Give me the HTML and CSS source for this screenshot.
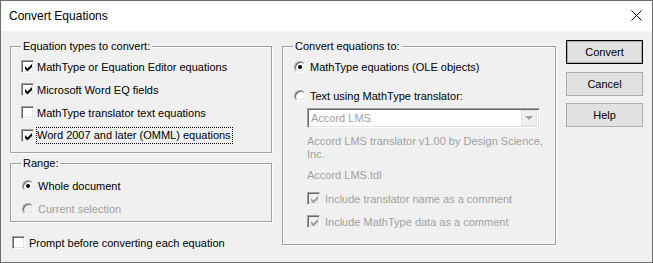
FILE: index.html
```html
<!DOCTYPE html>
<html lang="en">
  <head>
    <meta charset="UTF-8" />
    <title>Convert Equations</title>
    <link rel="stylesheet" href="styles.css">
  </head>

  <body>
    <div class="dialog">
      <div class="titlebar">
        <span class="title">Convert Equations</span>
        <svg class="close" width="11" height="11" viewBox="0 0 11 11">
          <path d="M0.5 0.5 L10.5 10.5 M10.5 0.5 L0.5 10.5" stroke="#000" stroke-width="1" fill="none" />
        </svg>
      </div>

      <div class="content">
        <div class="left">
          <div class="group types">
            <span class="legend">Equation types to convert:</span>
            <label class="row"><span class="check on"></span><span>MathType or Equation Editor equations</span></label>
            <label class="row"><span class="check on"></span><span>Microsoft Word EQ fields</span></label>
            <label class="row"><span class="check"></span><span>MathType translator text equations</span></label>
            <label class="row"><span class="check on"></span><span class="focus">Word 2007 and later (OMML) equations</span></label>
          </div>

          <div class="group range">
            <span class="legend">Range:</span>
            <label class="row"><span class="radio on"></span><span>Whole document</span></label>
            <label class="row disabled"><span class="radio"></span><span>Current selection</span></label>
          </div>

          <label class="row prompt"><span class="check"></span><span>Prompt before converting each equation</span></label>
        </div>

        <div class="group target">
          <span class="legend">Convert equations to:</span>
          <label class="row"><span class="radio on"></span><span>MathType equations (OLE objects)</span></label>
          <label class="row second"><span class="radio"></span><span>Text using MathType translator:</span></label>
          <div class="select">
            <span>Accord LMS</span>
            <span class="drop"></span>
          </div>
          <p class="note">Accord LMS translator v1.00 by Design Science,<br>Inc.</p>
          <p class="note file">Accord LMS.tdl</p>
          <label class="row sub first disabled"><span class="check on"></span><span>Include translator name as a comment</span></label>
          <label class="row sub disabled"><span class="check on"></span><span>Include MathType data as a comment</span></label>
        </div>

        <div class="buttons">
          <button class="default">Convert</button>
          <button>Cancel</button>
          <button>Help</button>
        </div>
      </div>
    </div>
  </body>
</html>
```

FILE: styles.css
```css
body {
  margin: 0;
  background-color: #f0f0f0;
  font-family: "Liberation Sans", Arial, sans-serif;
  font-size: 11px;
  color: #000;
}

.dialog {
  width: 653px;
  height: 263px;
  box-sizing: border-box;
  border: 1px solid #6d6d6d;
  background-color: #f0f0f0;
  display: flex;
  flex-direction: column;
}

.titlebar {
  height: 30px;
  background-color: #fff;
  display: flex;
  align-items: center;
  padding: 0 10px 1px 8px;
  box-sizing: border-box;
}

.title {
  font-size: 12px;
  flex: 1;
}

.content {
  display: flex;
  align-items: flex-start;
  padding: 9px 0 0 9px;
}

.left {
  width: 262px;
  display: flex;
  flex-direction: column;
  margin-top: 6px;
}

/* etched group box */
.group {
  border: 1px solid #a0a0a0;
  box-shadow: inset 1px 1px 0 #fff, 1px 1px 0 #fff;
  display: flex;
  flex-direction: column;
}

.legend {
  align-self: flex-start;
  line-height: 13px;
  margin: -7px 0 2px 10px;
  padding: 0 2px;
  background-color: #f0f0f0;
}

.types {
  padding-bottom: 5px;
}

.range {
  margin-top: 10px;
  padding-bottom: 1px;
}

.range .legend {
  margin-bottom: 4px;
}

.row {
  height: 23px;
  display: flex;
  align-items: center;
  gap: 3px;
  padding-left: 10px;
}

.range .row {
  padding-left: 11px;
}

.prompt {
  margin-top: 9px;
  padding-left: 2px;
  gap: 4px;
}

.focus {
  outline: 1px dotted #000;
  outline-offset: 0;
  padding: 1px 1px 1px 0;
  line-height: 13px;
}

.disabled {
  color: #a0a0a0;
}

/* sunken 3d check box */
.check {
  width: 13px;
  height: 13px;
  box-sizing: border-box;
  border: 1px solid;
  border-color: #a0a0a0 #fff #fff #a0a0a0;
  box-shadow: inset 1px 1px 0 #696969, inset -1px -1px 0 #e3e3e3;
  background-color: #fff;
  flex: none;
  display: flex;
  align-items: center;
  justify-content: center;
}

.check.on::after {
  content: "";
  width: 7px;
  height: 7px;
  margin: 1px 0 0 1px;
  background: url("data:image/svg+xml;utf8,<svg xmlns='http://www.w3.org/2000/svg' width='7' height='7'><path d='M0 2v3l2 2h1l4-4V0L2.5 4.5z' fill='black'/></svg>") no-repeat;
}

.disabled .check {
  background-color: #f0f0f0;
}

.disabled .check.on::after {
  background: url("data:image/svg+xml;utf8,<svg xmlns='http://www.w3.org/2000/svg' width='7' height='7'><path d='M0 2v3l2 2h1l4-4V0L2.5 4.5z' fill='%23a0a0a0'/></svg>") no-repeat;
}

/* sunken 3d radio */
.radio {
  width: 12px;
  height: 12px;
  box-sizing: border-box;
  border-radius: 50%;
  border: 1px solid;
  border-color: #a0a0a0 #fff #fff #a0a0a0;
  box-shadow: inset 1px 1px 0 #696969, inset -1px -1px 0 #e3e3e3;
  background-color: #fff;
  flex: none;
  display: flex;
  align-items: center;
  justify-content: center;
  margin-right: 1px;
}

.radio.on::after {
  content: "";
  width: 4px;
  height: 4px;
  border-radius: 50%;
  background-color: #000;
}

.disabled .radio {
  background-color: #f0f0f0;
}

.target {
  width: 274px;
  box-sizing: border-box;
  margin: 6px 0 0 10px;
  padding-bottom: 11px;
}

.target .row {
  padding-left: 11px;
}

.target .second {
  margin-top: 6px;
}

.target .sub {
  padding-left: 24px;
  gap: 5px;
}

.target .sub.first {
  margin-top: 5px;
}

.select {
  margin: 1px 0 0 24px;
  width: 233px;
  height: 20px;
  box-sizing: border-box;
  border: 1px solid;
  border-color: #a0a0a0 #fff #fff #a0a0a0;
  box-shadow: inset 1px 1px 0 #696969, inset -1px -1px 0 #e3e3e3;
  background-color: #fff;
  color: #a0a0a0;
  display: flex;
  align-items: center;
  padding: 0 2px 0 3px;
}

.select span:first-child {
  flex: 1;
}

.drop {
  width: 16px;
  height: 16px;
  box-sizing: border-box;
  border: 1px solid #e3e3e3;
  background-color: #f0f0f0;
  display: flex;
  align-items: center;
  justify-content: center;
}

.drop::after {
  content: "";
  border-left: 4px solid transparent;
  border-right: 4px solid transparent;
  border-top: 4px solid #a0a0a0;
}

.note {
  margin: 7px 0 0 24px;
  line-height: 13px;
  color: #a0a0a0;
}

.note.file {
  margin-top: 8px;
}

.buttons {
  display: flex;
  flex-direction: column;
  gap: 7.5px;
  margin-left: 10px;
}

button {
  width: 77px;
  height: 24px;
  font-family: "Liberation Sans", Arial, sans-serif;
  font-size: 11px;
  color: #000;
  background-color: #e1e1e1;
  border: 1px solid #adadad;
  padding: 0;
}

button.default {
  border-color: #000;
  box-shadow: inset 0 0 0 1px #adadad;
}
```
